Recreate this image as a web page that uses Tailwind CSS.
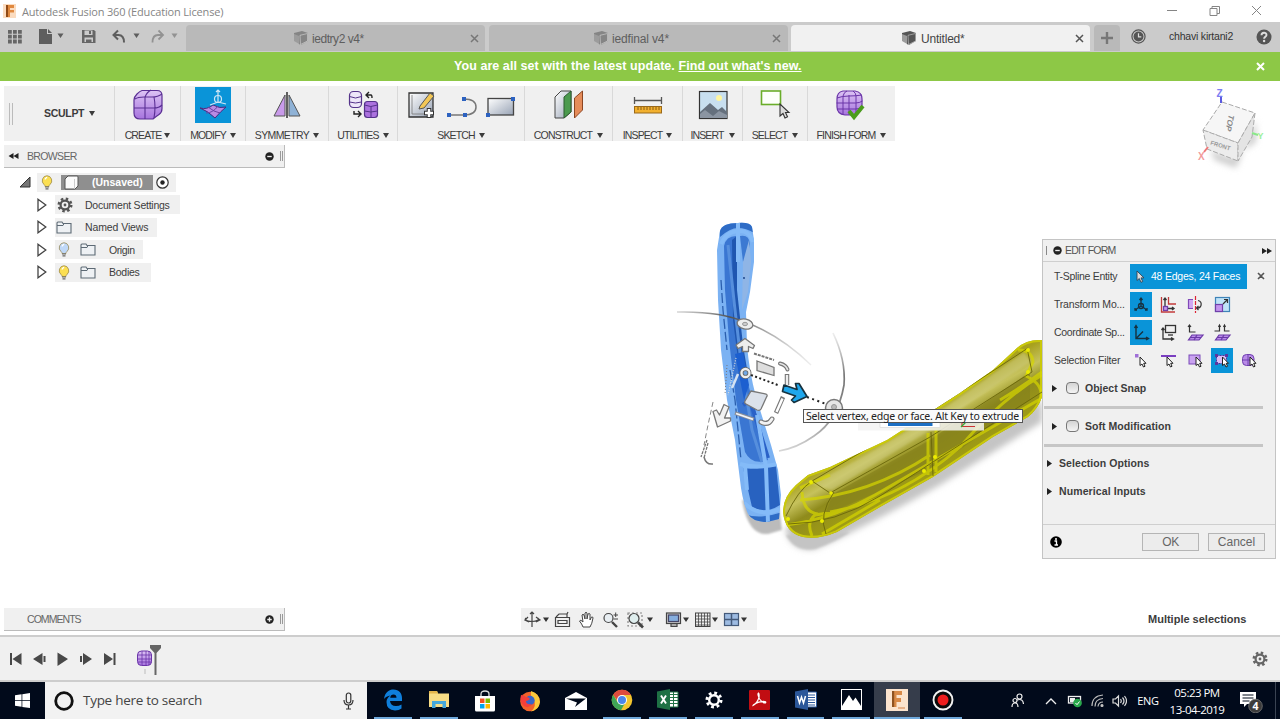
<!DOCTYPE html>
<html lang="en">
<head>
<meta charset="utf-8">
<title>Autodesk Fusion 360</title>
<script src="https://cdn.jsdelivr.net/npm/@tailwindcss/browser@4"></script>
</head>
<body class="bg-white">
<!-- shared icon symbols -->
<svg class="absolute w-0 h-0">
  <symbol id="caret" viewBox="0 0 6 5"><path d="M0 0H6L3 5Z" fill="currentColor"/></symbol>
  <symbol id="cube" viewBox="0 0 16 16"><path d="M1 3 9 1l6 2v8l-7 4-2-1V6L1 4Z" fill="currentColor"/><path d="M1 3.300 7 5v9.500L1 11Z" fill="currentColor" opacity=".55"/><path d="M7 5.300 14.500 3.500v7.500L7.500 14.500Z" fill="none" stroke="#fff" stroke-opacity=".45" stroke-width=".9"/></symbol>
  <symbol id="bulb" viewBox="0 0 12 15"><path d="M6 .7a5 5 0 0 0-3 8.800c.8.700 1 1.200 1 2h4c0-.8.200-1.300 1-2A5 5 0 0 0 6 .7Z" fill="currentColor" stroke="#8d7a3c" stroke-opacity=".75" stroke-width=".9"/><path d="M4.200 4.500a2 2 0 0 1 2-2" stroke="#fff" stroke-width="1.300" fill="none"/><path d="M4 12h4M4.500 13.800h3" stroke="#666" stroke-width="1.200"/></symbol>
  <symbol id="folder" viewBox="0 0 16 13"><path d="M1 12V2q0-1 1-1h4l1 1.500h8V12Z" fill="#eef1f4" stroke="#5d6a75" stroke-width="1.100"/><path d="M1 4.500h6l1-2" fill="none" stroke="#5d6a75" stroke-width="1"/></symbol>
  <symbol id="expand" viewBox="0 0 10 14"><path d="M1 1.200 8.800 7 1 12.800Z" fill="#fff" stroke="#444" stroke-width="1.300"/></symbol>
  <symbol id="gear" viewBox="0 0 16 16"><circle cx="8" cy="8" r="6.200" fill="none" stroke="currentColor" stroke-width="2.600" stroke-dasharray="2.435 2.435"/><circle cx="8" cy="8" r="4.400" fill="none" stroke="currentColor" stroke-width="2.200"/><circle cx="8" cy="8" r="1.400" fill="currentColor"/></symbol>
  <symbol id="cursor" viewBox="0 0 9 13"><path d="M1 1v9.500l2.300-2 1.700 3.800 1.700-.8-1.700-3.600H8Z" fill="#ddd" stroke="#345" stroke-width=".9"/></symbol>
  <symbol id="ffwd" viewBox="0 0 10 6"><path d="M0 0 5 3 0 6ZM5 0l5 3-5 3Z" fill="#222"/></symbol>
  <linearGradient id="gPurple" x1="0" y1="0" x2="0" y2="1"><stop offset="0" stop-color="#dcc3f4"/><stop offset="1" stop-color="#a774de"/></linearGradient>
  <linearGradient id="gSteel" x1="0" y1="0" x2="1" y2="1"><stop offset="0" stop-color="#fff"/><stop offset="1" stop-color="#98a3b5"/></linearGradient>
</svg>

<div class="w-[1280px] h-[719px] overflow-hidden flex flex-col bg-white font-['Liberation_Sans',sans-serif] text-[#3c3c3c] text-[10.5px] leading-none whitespace-nowrap">

  <!-- title bar -->
  <header class="h-[22px] shrink-0 flex items-center bg-white pl-[3px]">
    <svg class="w-[13px] h-[14px]" viewBox="0 0 13 14"><rect width="13" height="14" fill="#fbdcc0"/><path d="M3 1h8v3H7v2h4v2.500H7V13H3Z" fill="#e0893f"/><path d="M3 1h2v12H3Z" fill="#8f4a16"/></svg>
    <span class="ml-[6px] text-[11px] tracking-[-0.17px] font-['Open_Sans',sans-serif] text-[#858585]">Autodesk Fusion 360 (Education License)</span>
    <svg class="ml-auto w-[96px] h-[12px] mr-[18px]" viewBox="0 0 96 12"><path d="M1 5.500h10M44 3.500h7v7h-7ZM46 3.500v-2h7.500v7H51M86 1l9 9M95 1l-9 9" fill="none" stroke="#858585" stroke-width="1"/></svg>
  </header>

  <!-- document tabs -->
  <nav class="h-[30px] shrink-0 flex items-end bg-[#cbcbcb] pb-px">
    <svg class="w-[186px] h-[29px]" viewBox="0 0 186 29">
      <path d="M8 8h3.800v3.800H8Zm5 0h3.800v3.800H13Zm5 0h3.800v3.800H18ZM8 12.800h3.800v3.800H8Zm5 0h3.800v3.800H13Zm5 0h3.800v3.800H18ZM8 17.600h3.800v3.800H8Zm5 0h3.800v3.800H13Zm5 0h3.800v3.800H18Z" fill="#666"/>
      <path d="M39 7h8v5h5v10H39ZM48 7l4 4h-4Z" fill="#5e5e5e"/>
      <path d="M57.500 11.500h6l-3 4.500ZM133.500 11.500h6l-3 4.500Z" fill="#5e5e5e"/>
      <path d="M82 8h12l1.500 1.500V21H82Z" fill="#666"/><path d="M84.500 8.500h8v4.500h-8ZM84.500 15.500h8.500V20h-8.500Z" fill="#cbcbcb"/><path d="M89 9h2v3h-2ZM86 17.500h5.500V21H86Z" fill="#666"/>
      <path d="M118 8.500 113.500 13l4.500 4.500M114 13h4.500q5.500 0 5.500 7.500" fill="none" stroke="#5e5e5e" stroke-width="2"/>
      <path d="M158.500 8.500 163 13l-4.500 4.500M162.500 13H158q-5.500 0-5.500 7.500" fill="none" stroke="#929292" stroke-width="1.800"/>
      <path d="M171.500 11.500h6l-3 4.500Z" fill="#929292"/>
    </svg>
    <div class="w-[299px] h-[26px] bg-[#b9b9b9] rounded-t-sm flex items-center pl-[107px] pr-[6px] text-[12px] text-[#5e5e5e]">
      <svg class="w-4 h-4 text-[#858585]"><use href="#cube"/></svg><span class="ml-[3px] mt-[2px] tracking-[-0.45px]">iedtry2 v4*</span>
      <svg class="ml-auto w-[9px] h-[9px]" viewBox="0 0 9 9"><path d="M1 1l7 7M8 1 1 8" stroke="#777" stroke-width="1.500"/></svg>
    </div>
    <div class="w-[299px] ml-[4px] h-[26px] bg-[#b9b9b9] rounded-t-sm flex items-center pl-[104px] pr-[7px] text-[12px] text-[#5e5e5e]">
      <svg class="w-4 h-4 text-[#858585]"><use href="#cube"/></svg><span class="ml-[3px] mt-[2px] tracking-[-0.15px]">iedfinal v4*</span>
      <svg class="ml-auto w-[9px] h-[9px]" viewBox="0 0 9 9"><path d="M1 1l7 7M8 1 1 8" stroke="#777" stroke-width="1.500"/></svg>
    </div>
    <div class="w-[299px] ml-[3px] h-[26px] bg-[#f1f1f1] rounded-t-sm flex items-center pl-[110px] pr-[6px] text-[12px] text-[#444]">
      <svg class="w-4 h-4 text-[#555]"><use href="#cube"/></svg><span class="ml-[4px] mt-[2px] tracking-[-0.2px]">Untitled*</span>
      <svg class="ml-auto w-[9px] h-[9px]" viewBox="0 0 9 9"><path d="M1 1l7 7M8 1 1 8" stroke="#555" stroke-width="1.500"/></svg>
    </div>
    <div class="w-[26px] ml-[4px] h-[26px] bg-[#b9b9b9] rounded-t-sm flex items-center justify-center">
      <svg class="w-3 h-3" viewBox="0 0 12 12"><path d="M6 0v12M0 6h12" stroke="#777" stroke-width="2.400"/></svg>
    </div>
    <div class="flex-1 h-[29px] flex items-center pl-[11px] pr-[8px] text-[#333]">
      <svg class="w-[15px] h-[15px]" viewBox="0 0 16 16"><circle cx="8" cy="8" r="7" fill="none" stroke="#555" stroke-width="1.300"/><circle cx="8" cy="8" r="5.300" fill="#555"/><path d="M8 4.500V8.500h3" stroke="#ddd" stroke-width="1.300" fill="none"/></svg>
      <span class="ml-[23px] text-[10.5px] tracking-[-0.2px]">chhavi kirtani2</span>
      <svg class="ml-auto w-[16px] h-[16px]" viewBox="0 0 16 16"><circle cx="8" cy="8" r="7.500" fill="#555"/><path d="M5.500 6.200C5.500 3 10.500 3 10.500 6c0 1.800-2.400 1.900-2.400 3.800" fill="none" stroke="#ddd" stroke-width="1.900"/><circle cx="8.100" cy="12" r="1.200" fill="#ddd"/></svg>
    </div>
  </nav>

  <!-- update banner -->
  <div class="h-[29px] shrink-0 flex items-center bg-[#8dc846] text-white font-bold text-[12.5px] tracking-[0.06px] pb-px pl-[454px] pr-[15px]">
    <p>You are all set with the latest update. <span class="underline">Find out what's new.</span></p>
    <svg class="w-[9px] h-[9px] ml-auto" viewBox="0 0 9 9"><path d="M1 1l7 7M8 1 1 8" stroke="#fff" stroke-width="2"/></svg>
  </div>

  <!-- modelling canvas -->
  <main class="h-[554px] shrink-0 relative flex flex-col">
    <svg class="absolute inset-0 w-[1280px] h-[554px]" viewBox="0 81 1280 554">
      <defs>
        <filter id="soft" x="-20%" y="-20%" width="140%" height="140%"><feGaussianBlur stdDeviation="3"/></filter>
        <filter id="soft1" x="-20%" y="-20%" width="140%" height="140%"><feGaussianBlur stdDeviation="1.300"/></filter>
        <linearGradient id="gYel" gradientUnits="userSpaceOnUse" x1="895" y1="425" x2="930" y2="485"><stop offset="0" stop-color="#a8a11e"/><stop offset=".25" stop-color="#c6c25c"/><stop offset=".48" stop-color="#8f8b1c"/><stop offset="1" stop-color="#a5a212"/></linearGradient>
        <linearGradient id="gArc" x1="0" x2="1"><stop offset="0" stop-color="#999" stop-opacity=".4"/><stop offset=".4" stop-color="#555"/><stop offset="1" stop-color="#aaa" stop-opacity=".2"/></linearGradient>
        <linearGradient id="gArc2" x1="0" x2="0" y1="0" y2="1"><stop offset="0" stop-color="#aaa" stop-opacity=".2"/><stop offset=".35" stop-color="#777"/><stop offset=".7" stop-color="#888"/><stop offset="1" stop-color="#999" stop-opacity=".4"/></linearGradient>
        <clipPath id="cBlue"><path d="M720 231Q722 223 738 223 750 222 752 227L754 240 754 262 750 292 746 312 747 345Q749 370 756 397L771 445 778 470 781 495 779 519 767 522Q753 522 748 514 742 500 740 480L735 440 727 400 721 350 718 300 717 250Z"/></clipPath>
        <clipPath id="cYel"><path d="M783 512Q783 497 796 485L808 475 830 467 887 440 960 393 993 370 1017 348Q1027 339 1042 340V397Q1038 409 1028 417L993 437 933 477 880 507 837 532Q818 540 803 537 785 533 783 512Z"/></clipPath>
      </defs>

      <!-- shadows under the bodies -->
      <path d="M742 500Q748 536 768 534L782 530 779 505Z" fill="#bbb" filter="url(#soft1)"/>
      <path d="M785 528Q790 552 815 549 860 530 940 485L1042 422V400L940 465Z" fill="#c4c4c4" filter="url(#soft)"/>
      <path d="M786 535Q795 552 815 549 835 542 850 532Z" fill="#c4c4c4" filter="url(#soft1)"/>

      <!-- blue body -->
      <g clip-path="url(#cBlue)" fill="none">
        <rect x="710" y="218" width="80" height="310" fill="#7bb2f3"/>
        <path d="M718 222h36v11q-8-5-16-5t-18 9Z" fill="#2e6cc6"/>
        <path d="M724 246Q726 236 736 236V320L742 345 747 380 758 420 768 460Q752 466 745 452L736 400 729 340 725 290Z" fill="#3a76d2"/>
        <path d="M737 236V290L743 345 748 375 740 375 733 320 732 240Z" fill="#1f56b0"/>
        <path d="M728 245 735 310 742 370 752 430 762 462" stroke="#568fdd" stroke-width="3"/>
        <path d="M740 236Q749 234 750 244L747 258 743 262Z" fill="#3c79d2"/>
        <path d="M743 262 749 240 751 262 748 292 742 310Z" fill="#8fb5e6"/>
        <path d="M735 354 743 352 749 385 744 400Z" fill="#1c5fd0"/>
        <path d="M743 405 750 400 768 458" stroke="#2a62c8" stroke-width="4"/>
        <path d="M743 468Q752 470 765 467L776 466 780 505Q765 515 752 507Z" fill="#2862c0"/>
        <path d="M744 514Q760 520 782 512V525H744Z" fill="#2e6cc6"/>
        <path d="M738 222V262M721 244Q726 232 738 231T753 242M740 464Q755 469 778 464M757 415L766 467 768 523M744 503Q760 518 780 509M745 466 747 490" stroke="#84bbf8" stroke-width="4"/>
        <path d="M721 280 723 310 727 350M730 370 735 400 741 460" stroke="#2b5fae" stroke-width="1.300" stroke-dasharray="10 3"/>
        <circle cx="744" cy="278" r=".9" fill="#113a80"/>
      </g>

      <!-- yellow body -->
      <g clip-path="url(#cYel)" fill="none">
        <rect x="780" y="335" width="265" height="205" fill="url(#gYel)"/>
        <path d="M812 484Q870 455 945 408L1024 352 1030 362 930 430 832 490Z" fill="#d3d08a" opacity=".45" filter="url(#soft1)"/>
        <path d="M833 494 930 440 1030 372V400L935 467 825 515Z" fill="#86811c" opacity=".7"/>
        <path d="M783 512Q783 497 796 485L808 475 830 467 887 440 960 393 993 370 1017 348Q1027 339 1042 340V397Q1038 409 1028 417L993 437 933 477 880 507 837 532Q818 540 803 537 785 533 783 512Z" stroke="#c9c80a" stroke-width="4"/>
        <path d="M800 500Q870 495 930 455M830 512Q900 500 960 447 1000 400 1042 375M786 525Q830 520 875 495L1042 398M802 492Q803 512 818 514M812 536Q806 522 815 515L835 512M928 433V475M936 430V472M800 488 830 475M822 534 880 500M1018 350Q1032 350 1033 362L1026 376Q1045 385 1040 400M1000 400Q1025 385 1042 372" stroke="#d6d600" stroke-width="3" opacity=".7"/>
        <path d="M786 516Q798 490 812 481L930 412 1028 348M830 493 930 437 1032 372M788 524Q835 524 880 496L1042 392M812 481 830 493M834 492Q818 515 826 534M931 432 933 476M1027 348 1032 372" stroke="#6a670a" stroke-width=".9"/>
        <g fill="#ecec00"><circle cx="811" cy="482" r="2"/><circle cx="831" cy="493" r="1.800"/><circle cx="822" cy="521" r="2"/><circle cx="788" cy="519" r="2"/><circle cx="924" cy="471" r="2"/><circle cx="935" cy="457" r="2"/><circle cx="1028" cy="350" r="2"/><circle cx="1028" cy="372" r="2"/></g>
      </g>

      <!-- transform manipulator -->
      <g fill="none">
        <path d="M677 312Q720 311 745 322 780 335 811 365" stroke="url(#gArc)" stroke-width="1.500"/>
        <path d="M833 333Q846 360 844 385 838 420 814 436 797 448 779 451" stroke="url(#gArc2)" stroke-width="1.700"/>
        <path d="M713 402 708 425 704 445" stroke="#888" stroke-width="1" stroke-dasharray="5 3"/>
        <path d="M704 457Q706 465 713 464" stroke="#777" stroke-width="1.500"/>
        <path d="M736 358 728 395" stroke="#ddd" stroke-width="1.200" stroke-dasharray="1 1.500"/>
        <path d="M727 365 725 395" stroke="#777" stroke-width="1" stroke-dasharray="1 2"/>
        <ellipse cx="745" cy="324" rx="8" ry="5" transform="rotate(12 745 324)" fill="#eee" stroke="#777" stroke-width="1.300"/>
        <ellipse cx="745" cy="324" rx="2.500" ry="1.700" fill="#ccc" stroke="#999"/>
        <path d="M745 338.500 736 345 738 348.500 742.500 346.500V351.500H748.500V346.500L753 348.500 754.500 345.500Z" fill="#eee" stroke="#777" stroke-width="1.300" stroke-linejoin="round"/>
        <path d="M754 353.500 774 360" stroke="#777" stroke-width="2" stroke-dasharray="3 1"/>
        <path d="M757 361 774 367.500V375.500L757 370.500Z" fill="#dedede" stroke="#777" stroke-width="1.300"/>
        <path d="M780 363.500Q786 365 787.500 369.500" stroke="#777" stroke-width="4" stroke-linecap="round"/>
        <path d="M780 363.500Q786 365 787.500 369.500" stroke="#e8e8e8" stroke-width="1.700" stroke-linecap="round"/>
        <path d="M787 374V385" stroke="#777" stroke-width="4.500"/><path d="M787 375V385" stroke="#eee" stroke-width="2.300"/>
        <path d="M783 397 776 413" stroke="#777" stroke-width="4.500"/><path d="M782.500 398.500 776.500 412" stroke="#fff" stroke-width="2.500"/>
        <path d="M761 422Q768 426 772 419" stroke="#777" stroke-width="5" stroke-linecap="round"/><path d="M761 422Q768 426 772 419" stroke="#f2f2f2" stroke-width="2.700" stroke-linecap="round"/>
        <path d="M735 413 754 419.500" stroke="#8a8f98" stroke-width="3.500"/><path d="M736 413.500 753 419.300" stroke="#f0f4fa" stroke-width="1.800"/>
        <path d="M732 388 738 374" stroke="#d5e3f3" stroke-width="2.500"/>
        <path d="M751 391 766 394Q768 395 766.500 397L761 409Q760 411 757 410L746 404Q744 403 745 401Z" fill="#dbe1ea" stroke="#777" stroke-width="1.300"/>
        <path d="M751 375 779 385.500" stroke="#222" stroke-width="2" stroke-dasharray="2 2.400"/>
        <path d="M807 397 826 404" stroke="#222" stroke-width="2" stroke-dasharray="2 3.500"/>
        <circle cx="745.500" cy="373" r="4" fill="#6fa7e6" stroke="#666" stroke-width="4"/><circle cx="745.500" cy="373" r="4" stroke="#eee" stroke-width="2.300"/>
        <path d="M784 385 797 389.500 795.500 383.500 799 383.500 807 396.500 794 402.500 791.500 400 795.500 396 782.500 391.500Z" fill="#1fa7ec" stroke="#16323f" stroke-width="1.700" stroke-linejoin="round"/>
        <path d="M724 404.500 719.500 415 716.500 410 713 411.500 717.500 427 730.500 421 730.500 418 724.500 418 729 407Z" fill="#f2f2f2" stroke="#777" stroke-width="1.300" stroke-linejoin="round"/>
        <circle cx="834" cy="408" r="8.500" fill="#e6e6e6" stroke="#777" stroke-width="1.500"/><circle cx="834" cy="407" r="2.500" fill="#bbb" stroke="#999"/>
        <path d="M707 440 701 457M708 443 704 458" stroke="#777" stroke-width="1.300" stroke-dasharray="3 1"/>
      </g>

      <!-- mini toolbar hidden behind the tooltip -->
      <rect x="858" y="422" width="126" height="8.500" fill="#f3f3f3" opacity=".85"/>
      <rect x="880" y="422" width="60" height="5.500" fill="#fff" stroke="#ccc" stroke-width=".5"/>
      <rect x="888" y="422" width="44.500" height="4" fill="#1c6fc4"/>
      <path d="M962 423v3.500h13" stroke="#c33" stroke-width="1.200" fill="none"/><path d="M961 427l6-6" stroke="#3a3" stroke-width="1.200"/>

      <!-- view cube -->
      <path d="M1210 150 1232 158 1256 142 1256 120 1236 168 1215 160Z" fill="#ccc" filter="url(#soft)"/>
      <path d="M1222 102 1255 113 1238 143 1203 130Z" fill="#f6f6f6" stroke="#aaa" stroke-width="1" stroke-dasharray="5 2"/>
      <path d="M1203 130 1238 143 1238 161 1207 149Z" fill="#ececec" stroke="#aaa" stroke-width="1" stroke-dasharray="5 2"/>
      <path d="M1255 113 1252 137 1238 161V143Z" fill="#e4e4e4" stroke="#aaa" stroke-width="1" stroke-dasharray="5 2"/>
      <text transform="translate(1229 114) rotate(102) skewX(-12)" font-size="8" font-weight="bold" fill="#888">TOP</text>
      <text transform="translate(1210 144.500) rotate(17)" font-size="6" font-weight="bold" fill="#999">FRONT</text>
      <path d="M1221 103V96" stroke="#5a5ae0" stroke-width="2"/><path d="M1252 133l6 2" stroke="#8ae88a" stroke-width="2"/><path d="M1208 147l-4 5" stroke="#e77" stroke-width="2"/>
      <text x="1216.500" y="97" font-size="10" font-weight="bold" fill="#7d7df2">Z</text><text x="1257.500" y="139" font-size="9" font-weight="bold" fill="#9df09d">Y</text><text x="1198" y="160" font-size="10" font-weight="bold" fill="#f29a9a">X</text>
    </svg>

    <!-- ribbon -->
    <div class="relative mt-[5px] ml-1 w-[891px] h-[55px] bg-[#f0f0f0] grid grid-cols-[111px_66px_65px_83px_69px_127px_88px_70px_60px_65px_87px] divide-x divide-[#d9d9d9] tracking-[-0.85px] text-[10.5px]">
      <div class="flex items-center h-full">
        <div class="ml-[5px] w-[4px] h-[22px] border-x border-[#bbb]"></div>
        <span class="ml-[31px] font-bold tracking-[-0.3px]">SCULPT</span><svg class="ml-[5px] w-[6px] h-[5px]"><use href="#caret"/></svg>
      </div>
      <div class="flex flex-col items-center pt-px">
        <svg class="w-9 h-9" viewBox="0 0 36 36"><path d="M12 3.500h15q5 0 5 5v13q0 4-3 6t-6 4.500H10q-6 0-6-6V13q0-3 3-6t5-3.500Z" fill="url(#gPurple)" stroke="#5a2f94" stroke-width="1.200"/><path d="M5 12q3-2 9-2h8q6 0 10-3M15 10v22M24 10q2 10 0 21M4 21h20q5 0 8-3M15 10q2-5 6-7" fill="none" stroke="#5a2f94" stroke-width="1.100"/></svg>
        <span class="flex items-center mt-[7px]">CREATE<svg class="ml-[3px] w-[6px] h-[5px]"><use href="#caret"/></svg></span>
      </div>
      <div class="flex flex-col items-center pt-px">
        <svg class="w-9 h-9 bg-[#0a94d8]" viewBox="0 0 36 36"><path d="M5 21q7 2 13-3 7 4 13 2-5 4-11 11-7-7-15-10Z" fill="#b98be4" stroke="#4b2a80"/><path d="M11 26q7 0 12-7M25 26q-6-1-12-6" stroke="#6a43a5" fill="none"/><path d="M23 3v12M23 15l-8 3M23 15l8 2M21 5l2-2 2 2" fill="none" stroke="#cfe6f5" stroke-width="1.200"/><circle cx="23" cy="12" r="3.500" fill="none" stroke="#cfe6f5" stroke-width="1.200"/></svg>
        <span class="flex items-center mt-[7px]">MODIFY<svg class="ml-[4px] w-[6px] h-[5px]"><use href="#caret"/></svg></span>
      </div>
      <div class="flex flex-col items-center pt-px">
        <svg class="w-9 h-9" viewBox="0 0 36 36"><path d="M16 8v21H5Z" fill="#c99bea" stroke="#555"/><path d="M20 8v21h11Z" fill="#8fb2d6" stroke="#555"/><path d="M18 5v26" stroke="#222" stroke-width="1.400"/></svg>
        <span class="flex items-center mt-[7px] tracking-[-0.6px]">SYMMETRY<svg class="ml-[4px] w-[6px] h-[5px]"><use href="#caret"/></svg></span>
      </div>
      <div class="flex flex-col items-center pt-px">
        <svg class="w-9 h-9" viewBox="0 0 36 36"><rect x="4.500" y="4.500" width="12" height="16" rx="4" fill="#eee6f8" stroke="#55338a" stroke-width="1.200"/><path d="M4.500 9.500q6 3 12 0M4.500 15q6 2 12 0" stroke="#55338a" fill="none"/><rect x="19.500" y="14.500" width="13" height="16" rx="3" fill="#ab71de" stroke="#55338a" stroke-width="1.200"/><path d="M19.500 18q6 3 13 0M19.500 24q6 2 13 0M26 19v11" stroke="#55338a" fill="none"/><path d="M21 8h5q1 0 1 3M24 5l-3 3 3 3M9 24v3h6M13 24l3 3-3 3" fill="none" stroke="#222" stroke-width="1.400"/></svg>
        <span class="flex items-center mt-[7px]">UTILITIES<svg class="ml-[4px] w-[6px] h-[5px]"><use href="#caret"/></svg></span>
      </div>
      <div class="flex flex-col items-center pt-px">
        <svg class="w-[118px] h-9" viewBox="0 0 118 36">
          <path d="M7 6h24v24H7Z" fill="url(#gSteel)" stroke="#333" stroke-width="1.300"/><path d="M10 8v19h18" fill="none" stroke="#777" stroke-width=".8"/><path d="M18 19 28 6l4 3-10 12-5 1Z" fill="#f3c757" stroke="#555"/><path d="M27 21v10M22 26h10" stroke="#333" stroke-width="4.500"/><path d="M27 22v8M23 26h8" stroke="#fff" stroke-width="2.500"/>
          <path d="M47 28h16M62 12q12 0 12 8t-12 8" fill="none" stroke="#777" stroke-width="1.500"/><path d="M45 26h4v4h-4ZM61 26h4v4h-4ZM60 10h4v4h-4Z" fill="#2d62c0"/>
          <rect x="86" y="11.500" width="25.500" height="16.500" fill="url(#gSteel)" stroke="#444" stroke-width="1.300"/><path d="M84 26h4v4h-4ZM109 10h4v4h-4Z" fill="#2d62c0"/>
        </svg>
        <span class="flex items-center mt-[7px]">SKETCH<svg class="ml-[4px] w-[6px] h-[5px]"><use href="#caret"/></svg></span>
      </div>
      <div class="flex flex-col items-center pt-px">
        <svg class="w-9 h-9" viewBox="0 0 36 36"><path d="M4 10l6-6h10v21l-7 6H4Z" fill="url(#gSteel)" stroke="#444"/><path d="M13 10 20 4v21l-7 6Z" fill="#4b9a4e" stroke="#2c5d30"/><path d="M23.500 11 31.500 4v19l-8 8Z" fill="#e58c5a" stroke="#8c4522"/></svg>
        <span class="flex items-center mt-[7px]">CONSTRUCT<svg class="ml-[5px] w-[6px] h-[5px]"><use href="#caret"/></svg></span>
      </div>
      <div class="flex flex-col items-center pt-px">
        <svg class="w-9 h-9" viewBox="0 0 36 36"><path d="M4.500 10v7M31.500 10v7M5 13.500h26" stroke="#555" stroke-width="1.300"/><rect x="4.500" y="19.500" width="27" height="6.500" fill="#f2b02e" stroke="#99691a"/><path d="M8 20v3M11 20v3M14 20v3M17 20v3M20 20v3M23 20v3M26 20v3M29 20v3" stroke="#7b5210" stroke-width=".9"/></svg>
        <span class="flex items-center mt-[7px]">INSPECT<svg class="ml-[4px] w-[6px] h-[5px]"><use href="#caret"/></svg></span>
      </div>
      <div class="flex flex-col items-center pt-px">
        <svg class="w-9 h-9" viewBox="0 0 36 36"><rect x="4.500" y="4.500" width="27.500" height="27" fill="#c8dfef" stroke="#333" stroke-width="1.200"/><circle cx="24" cy="11" r="3" fill="#fff6a0"/><path d="M5 25l10-9 8 7 4-3 5 5v6H5Z" fill="#65707d"/><path d="M5 27l5-4 8 6 6-5 8 4v3H5Z" fill="#8b95a2"/></svg>
        <span class="flex items-center mt-[7px]">INSERT<svg class="ml-[5px] w-[6px] h-[5px]"><use href="#caret"/></svg></span>
      </div>
      <div class="flex flex-col items-center pt-px">
        <svg class="w-9 h-9" viewBox="0 0 36 36"><rect x="4.500" y="4" width="19" height="13.500" fill="#fcfffa" stroke="#6aad2a" stroke-width="1.600"/><path d="M23 17v12l3-2.500 2 4.500 2.500-1.200-2-4.300H32Z" fill="#ddd" stroke="#333" stroke-width="1.100"/></svg>
        <span class="flex items-center mt-[7px]">SELECT<svg class="ml-[5px] w-[6px] h-[5px]"><use href="#caret"/></svg></span>
      </div>
      <div class="flex flex-col items-center pt-px">
        <svg class="w-9 h-9 mr-[4px]" viewBox="0 0 36 36"><path d="M11 4h12q7 1 7 8v7q-1 7-7 9H13q-8-1-8-8v-8q0-7 6-8Z" fill="url(#gPurple)" stroke="#6a34a8" stroke-width="1.200"/><path d="M5 11q5-2 12-2t13-1M4.500 16h19q4 0 7-2M5 22h19q3 0 6-2M11 9v18M17 8v20M24 9v18M11 9q1-4 4-5M24 9q0-3-3-5" fill="none" stroke="#6a34a8" stroke-width="1"/><path d="M17 24l5 6 9-11" fill="none" stroke="#4b9d1c" stroke-width="4"/></svg>
        <span class="flex items-center mt-[7px]">FINISH FORM<svg class="ml-[5px] w-[6px] h-[5px]"><use href="#caret"/></svg></span>
      </div>
    </div>

    <div class="relative flex-1 flex justify-between">
      <!-- left column: browser tree and comments -->
      <aside class="ml-1 w-[281px] flex flex-col pt-1 pb-[4px]">
        <div class="h-[23px] bg-[#f0f0f0] border-b border-r border-[#bbb] flex items-center pl-[4px] pr-px text-[#666]">
          <svg class="w-[11px] h-[6px] rotate-180"><use href="#ffwd"/></svg>
          <span class="ml-2 tracking-[-0.65px]">BROWSER</span>
          <svg class="ml-auto w-[9px] h-[9px]" viewBox="0 0 10 10"><circle cx="5" cy="5" r="4.700" fill="#222"/><path d="M2.500 5h5" stroke="#eee" stroke-width="1.500"/></svg>
          <div class="ml-[6px] w-[3px] h-[10px] border-x border-[#999]"></div>
        </div>
        <div class="pt-[3px] flex flex-col leading-none">
          <div class="h-[22.5px] flex items-center pl-[15px]">
            <svg class="w-[12px] h-[12px]" viewBox="0 0 12 12"><path d="M11 1v10H1Z" fill="#777" stroke="#333"/></svg>
            <div class="ml-[6px] w-[139px] h-[19px] bg-[#f0f0f0] flex items-center">
              <svg class="ml-[4px] w-[12px] h-[15px] text-[#fbdf53]"><use href="#bulb"/></svg>
              <div class="ml-[8px] w-[92px] h-[15px] bg-[#8f8f8f] flex items-center text-white font-bold">
                <svg class="ml-[3px] w-[15px] h-[15px]" viewBox="0 0 15 15"><path d="M1 4l3-3h9q1 0 1 1v9l-3 3H1Z" fill="#fbfbfb" stroke="#555"/><path d="M10.500 4v10" stroke="#ccc"/></svg>
                <span class="ml-[13px]">(Unsaved)</span>
              </div>
              <svg class="ml-[3px] w-[13px] h-[13px]" viewBox="0 0 13 13"><circle cx="6.500" cy="6.500" r="5.700" fill="#fff" stroke="#333" stroke-width="1.200"/><circle cx="6.500" cy="6.500" r="2.200" fill="#222"/></svg>
            </div>
          </div>
          <div class="h-[22.5px] flex items-center pl-[33px]">
            <svg class="w-[10px] h-[14px]"><use href="#expand"/></svg>
            <div class="ml-[8px] w-[125px] h-[19px] bg-[#f0f0f0] flex items-center"><svg class="ml-[2px] w-[16px] h-[16px] text-[#555]"><use href="#gear"/></svg><span class="ml-[12px] tracking-[-0.24px]">Document Settings</span></div>
          </div>
          <div class="h-[22.5px] flex items-center pl-[33px]">
            <svg class="w-[10px] h-[14px]"><use href="#expand"/></svg>
            <div class="ml-[8px] w-[102px] h-[19px] bg-[#f0f0f0] flex items-center"><svg class="ml-[1px] w-[16px] h-[13px]"><use href="#folder"/></svg><span class="ml-[13px] tracking-[-0.1px]">Named Views</span></div>
          </div>
          <div class="h-[22.5px] flex items-center pl-[33px]">
            <svg class="w-[10px] h-[14px]"><use href="#expand"/></svg>
            <div class="ml-[8px] w-[88px] h-[19px] bg-[#f0f0f0] flex items-center"><svg class="ml-[3px] w-[12px] h-[15px] text-[#bfd8f8]"><use href="#bulb"/></svg><svg class="ml-[10px] w-[16px] h-[13px]"><use href="#folder"/></svg><span class="ml-[13px] tracking-[-0.4px]">Origin</span></div>
          </div>
          <div class="h-[22.5px] flex items-center pl-[33px]">
            <svg class="w-[10px] h-[14px]"><use href="#expand"/></svg>
            <div class="ml-[8px] w-[96px] h-[19px] bg-[#f0f0f0] flex items-center"><svg class="ml-[3px] w-[12px] h-[15px] text-[#fbdf53]"><use href="#bulb"/></svg><svg class="ml-[10px] w-[16px] h-[13px]"><use href="#folder"/></svg><span class="ml-[13px] tracking-[-0.25px]">Bodies</span></div>
          </div>
        </div>
        <div class="mt-auto h-[23px] bg-[#f0f0f0] border-b border-r border-[#bbb] flex items-center pl-[23px] pr-px text-[#666]">
          <span class="tracking-[-0.95px]">COMMENTS</span>
          <svg class="ml-auto w-[9px] h-[9px]" viewBox="0 0 10 10"><circle cx="5" cy="5" r="4.700" fill="#222"/><path d="M2.500 5h5M5 2.500v5" stroke="#eee" stroke-width="1.500"/></svg>
          <div class="ml-[6px] w-[3px] h-[10px] border-x border-[#999]"></div>
        </div>
      </aside>

      <!-- view navigation strip -->
      <div class="self-end mb-[5px] w-[236px] h-[22px] bg-[#f0f0f0] mr-[49px]">
        <svg class="w-[236px] h-[22px]" viewBox="521 608 236 22" fill="none" stroke="#444" stroke-width="1.200">
          <path d="M532 612v15M530 614l2-2 2 2M526 618q-3 3 6 3.500 8-.5 6-3.500M536 622l4-2-4-3M528 617l-3 3 4 2"/>
          <path d="M543 617.500h6l-3 4.500ZM647 617.500h6l-3 4.500ZM683 617.500h6l-3 4.500ZM712 617.500h6l-3 4.500ZM741 617.500h6l-3 4.500Z" fill="#333" stroke="none"/>
          <path d="M555.500 617.500h14v9h-14ZM558 620.500h9v3h-9ZM556 617l3-3h8v3M567 614l1-2"/>
          <path d="M583 627q-1-3-3.500-6 1-2 3.500 1l-1-7q1-1.500 2 0l1 4v-6q1-1.500 2 0v6l1-5q1.500-1 2 0v6l1.500-3q1.500-.5 1.500 1-1 6-3 9Z" fill="#fff" stroke-width="1"/>
          <circle cx="608.500" cy="618" r="4.500" fill="#e8eef2"/><path d="M612 622l5 5" stroke-width="2.400"/><path d="M613.500 615h4.500M615.700 612.500v4.500M613.500 619h4.500" stroke-width="1"/>
          <path d="M628 613h14v13h-14Z" stroke-dasharray="2 2" stroke="#888"/><circle cx="634" cy="618.500" r="5" fill="#dfeeee"/><path d="M638 622.500l5 5" stroke-width="2.600"/>
          <rect x="666.500" y="613" width="14" height="10.500" fill="#ccc"/><rect x="668.500" y="615" width="10" height="6.500" fill="#86aede" stroke="#446"/><path d="M671 624v2.500h6V624" fill="#aaa"/>
          <rect x="695.500" y="613" width="14.500" height="13.500" fill="#eee" stroke-width="1"/><path d="M698.500 613v13M701.500 613v13M704.500 613v13M707.500 613v13M696 616h14M696 619h14M696 622h14M696 625h14" stroke-width=".8"/>
          <rect x="724.500" y="613.500" width="14" height="12" fill="#9dbbe2" stroke="#445a7a"/><path d="M731.500 613v13M724 619.500h15" stroke="#445a7a" stroke-width="1.500"/>
        </svg>
      </div>

      <!-- right column: edit form and status -->
      <aside class="w-[238px] pt-[98px] flex flex-col">
        <section class="w-[234px] h-[320px] bg-[#f0f0f0] border border-[#c4c4c4] flex flex-col tracking-[-0.2px]">
          <div class="h-[22px] shrink-0 border-b border-[#cfcfcf] flex items-center pl-px pr-[3px] text-[#555]">
            <div class="w-[3px] h-[9px] border-r border-[#888]"></div>
            <svg class="ml-[6px] w-[9px] h-[9px]" viewBox="0 0 10 10"><circle cx="5" cy="5" r="4.700" fill="#222"/><path d="M2.500 5h5" stroke="#eee" stroke-width="1.500"/></svg>
            <span class="ml-[3px] tracking-[-0.8px]">EDIT FORM</span>
            <svg class="ml-auto w-[10px] h-[6px]"><use href="#ffwd"/></svg>
          </div>
          <div class="grid grid-cols-[76px_1fr] auto-rows-[28px] items-center pl-[11px]">
            <span class="tracking-[-0.3px]">T-Spline Entity</span>
            <div class="flex items-center">
              <div class="w-[117px] h-[25px] bg-[#0a94d8] flex items-center text-white"><svg class="ml-[6px] w-[9px] h-[13px]"><use href="#cursor"/></svg><span class="ml-[6px] tracking-[-0.23px]">48 Edges, 24 Faces</span></div>
              <svg class="ml-[10px] w-[8px] h-[8px]" viewBox="0 0 8 8"><path d="M1 1l3 3-3 3M7 1 4 4l3 3" stroke="#555" stroke-width="1.600" fill="none"/></svg>
            </div>
            <span>Transform Mo...</span>
            <div class="flex gap-[5px]">
              <svg class="w-[22px] h-[25px] bg-[#0a94d8]" viewBox="0 0 22 25" fill="none" stroke="#17313f" stroke-width="1.300"><path d="M11 6v8M11 14l-6 4M11 14l6 4M9.500 8 11 6l1.500 2M5 16v2h2M17 16v2h-2"/><circle cx="11" cy="14" r="2.500"/></svg>
              <svg class="w-[22px] h-[25px]" viewBox="0 0 22 25" fill="none" stroke-width="1.300"><path d="M4.500 5v15H18M11.500 5v7H19" stroke="#c23b3b"/><path d="M8 6v8M6.500 8 8 6l1.500 2M11 16.500h6M15 15l2 1.500-2 1.500" stroke="#333"/><rect x="6.500" y="14.500" width="4" height="4" fill="#c69af0" stroke="#7040a8"/></svg>
              <svg class="w-[22px] h-[25px]" viewBox="0 0 22 25" fill="none" stroke-width="1.200"><path d="M9 7.500H4.500v9H9" fill="#d0a8f2" stroke="#8048b8"/><path d="M11.500 4v17" stroke="#d23" stroke-dasharray="4 1"/><path d="M14 8.500q4 1 3 5-1 3-4 2.500M14.500 14l-2 2 2 2" stroke="#333"/></svg>
              <svg class="w-[22px] h-[25px]" viewBox="0 0 22 25" fill="none" stroke-width="1.200"><rect x="4.500" y="5.500" width="14" height="14" fill="#bfe3f8" stroke="#3f84b8"/><rect x="4.500" y="12.500" width="7" height="7" fill="#c494ee" stroke="#7040a8"/><path d="M12 12l4.500-4.500M13 7.500h3.500V11" stroke="#333"/></svg>
            </div>
            <span class="tracking-[-0.33px]">Coordinate Sp...</span>
            <div class="flex gap-[5px]">
              <svg class="w-[22px] h-[25px] bg-[#0a94d8]" viewBox="0 0 22 25" fill="none" stroke="#17313f" stroke-width="1.400"><path d="M6 5.500v13h12M4.500 8 6 5.500 7.500 8M16 17l2.500 1.500L16 20M6 18.500l7-7"/></svg>
              <svg class="w-[22px] h-[25px]" viewBox="0 0 22 25" fill="none" stroke="#333" stroke-width="1.300"><path d="M6 8v11h10M4.500 10 6 8l1.500 2M14 17.500l2.500 1.500-2.500 1.500"/><rect x="8.500" y="5.500" width="10" height="7"/><path d="M11 15h5"/></svg>
              <svg class="w-[22px] h-[25px]" viewBox="0 0 22 25" fill="none" stroke="#333" stroke-width="1.200"><path d="M5.500 5v7h6M4 7l1.500-2L7 7"/><path d="M8 15h11l-4 5H4.500Z" fill="#b98be8" stroke="#6a38a8"/><path d="M6 17.500h11M13 15l-3 5" stroke="#6a38a8"/></svg>
              <svg class="w-[22px] h-[25px]" viewBox="0 0 22 25" fill="none" stroke="#333" stroke-width="1.200"><path d="M8.500 5v6H3.500M13.500 5v6h5M7.500 7l1-2 1 2M12.500 7l1-2 1 2"/><path d="M8 15h11l-4 5H4.500Z" fill="#b98be8" stroke="#6a38a8"/><path d="M6 17.500h11M13 15l-3 5" stroke="#6a38a8"/></svg>
            </div>
            <span>Selection Filter</span>
            <div class="flex gap-[5px]">
              <svg class="w-[22px] h-[25px]" viewBox="0 0 22 25"><rect x="5" y="6" width="3.500" height="3.500" fill="#a070d8"/><path d="M10 9v8.500l2-1.500 1.500 3 1.500-.7-1.300-3H16Z" fill="#fff" stroke="#222"/></svg>
              <svg class="w-[22px] h-[25px]" viewBox="0 0 22 25"><path d="M4 8h15" stroke="#7a3fc0" stroke-width="2"/><path d="M10 9v8.500l2-1.500 1.500 3 1.500-.7-1.300-3H16Z" fill="#fff" stroke="#222"/></svg>
              <svg class="w-[22px] h-[25px]" viewBox="0 0 22 25"><rect x="5" y="7" width="11" height="9" fill="#c9a2f0" stroke="#7a4ab8"/><path d="M12 9v8.500l2-1.500 1.500 3 1.500-.7-1.300-3H18Z" fill="#fff" stroke="#222"/></svg>
              <svg class="w-[22px] h-[25px] bg-[#0a94d8]" viewBox="0 0 22 25"><rect x="5.500" y="7.500" width="10" height="8" fill="#d9bdf5" stroke="#53309a" stroke-dasharray="2 1"/><path d="M4 6h3v3H4ZM14 6h3v3h-3ZM4 14h3v3H4Z" fill="#5a36a0"/><path d="M11.500 9v8.500l2-1.500 1.500 3 1.500-.7-1.300-3h2.300Z" fill="#fff" stroke="#222"/></svg>
              <svg class="w-[22px] h-[25px]" viewBox="0 0 22 25"><rect x="4.500" y="6.500" width="11.500" height="11" rx="4" fill="#b98be8" stroke="#7040b0"/><path d="M5 12h11M10 7v10" stroke="#7040b0"/><path d="M12 9v8.500l2-1.500 1.500 3 1.500-.7-1.300-3H18Z" fill="#fff" stroke="#222"/></svg>
            </div>
          </div>
          <div class="h-[28px] flex items-center pl-[9px] font-bold tracking-normal"><svg class="w-[5px] h-[7px]" viewBox="0 0 5 7"><path d="M0 0 5 3.500 0 7Z" fill="#222"/></svg><span class="ml-[9px] w-[13px] h-[12px] rounded-sm border border-[#777] bg-linear-to-b from-[#d4d4d4] to-[#f4f4f4]"></span><span class="ml-[6px]">Object Snap</span></div>
          <div class="mt-[4px] mr-[12px] ml-px h-[3px] bg-[#c6c6c6]"></div>
          <div class="mt-[3px] h-[28px] flex items-center pl-[9px] font-bold"><svg class="w-[5px] h-[7px]" viewBox="0 0 5 7"><path d="M0 0 5 3.500 0 7Z" fill="#222"/></svg><span class="ml-[9px] w-[13px] h-[12px] rounded-sm border border-[#777] bg-linear-to-b from-[#d4d4d4] to-[#f4f4f4]"></span><span class="ml-[6px] tracking-[0.04px]">Soft Modification</span></div>
          <div class="mt-[4px] mr-[12px] ml-px h-[3px] bg-[#c6c6c6]"></div>
          <div class="mt-[2px] h-[28px] flex items-center pl-[4px] font-bold"><svg class="w-[5px] h-[7px]" viewBox="0 0 5 7"><path d="M0 0 5 3.500 0 7Z" fill="#222"/></svg><span class="ml-[7px] tracking-[0.07px]">Selection Options</span></div>
          <div class="h-[28px] flex items-center pl-[4px] font-bold"><svg class="w-[5px] h-[7px]" viewBox="0 0 5 7"><path d="M0 0 5 3.500 0 7Z" fill="#222"/></svg><span class="ml-[7px] tracking-[0.1px]">Numerical Inputs</span></div>
          <div class="mt-auto h-[34px] border-t border-[#cfcfcf] flex items-center pl-[7px] pr-[10px] text-[12px] text-[#666] tracking-normal">
            <svg class="w-[12px] h-[12px]" viewBox="0 0 12 12"><circle cx="6" cy="6" r="5.800" fill="#000"/><path d="M4.500 5H6.500V9M4.500 9h3.500" stroke="#fff" stroke-width="1.300" fill="none"/><circle cx="6" cy="2.900" r="1" fill="#fff"/></svg>
            <div class="ml-auto w-[57px] h-[18px] border border-[#b5b5b5] bg-[#ececec] flex items-center justify-center tracking-[-0.4px]">OK</div>
            <div class="ml-[9px] w-[57px] h-[18px] border border-[#b5b5b5] bg-[#ececec] flex items-center justify-center">Cancel</div>
          </div>
        </section>
        <p class="mt-auto mb-[10px] ml-[106px] font-bold text-[11px]">Multiple selections</p>
      </aside>
    </div>

    <!-- tooltip -->
    <div class="absolute left-[803px] top-[328px] w-[220px] h-[14px] border border-[#555] bg-[#fafafa] flex items-center pl-[2px] text-[10.5px] tracking-[-0.2px] text-[#222] font-['Noto_Sans',sans-serif]">Select vertex, edge or face. Alt Key to extrude</div>
  </main>

  <!-- timeline -->
  <div class="h-[47px] shrink-0 bg-[#f0f0f0] border-y-2 border-[#cdcdcd]">
    <div class="h-full flex items-center justify-between pr-[12px]">
      <svg class="w-[170px] h-[43px]" viewBox="0 637 170 43" fill="#484848">
        <path d="M10 653h2v12h-2ZM21.500 653v12L12.500 659ZM42.500 653v12L33 659ZM43.500 656h2v6h-2ZM57.500 652.500V666L68 659ZM80 656h2v6h-2ZM83 653v12l9-6ZM104 653v12l9-6ZM113.500 653h2v12h-2Z"/>
        <rect x="137.500" y="651" width="14" height="14.500" rx="4" fill="url(#gPurple)" stroke="#6a34a8"/><path d="M138 655h14M138 659h14M138 662h14M142 651v14M146 651v14M149 651v14" stroke="#6a34a8" stroke-width=".8"/>
        <path d="M144.500 669h1v5h-1Z" fill="#bbb"/>
        <path d="M150 645h11v3l-4.500 5V675h-2V653l-4.500-5Z" fill="#666"/>
      </svg>
      <svg class="w-[16px] h-[16px] text-[#666]"><use href="#gear"/></svg>
    </div>
  </div>

  <!-- Windows taskbar -->
  <footer class="flex-1 flex bg-[#010a1b] text-white font-['Open_Sans',sans-serif]">
    <div class="w-[45px] flex items-center justify-center"><svg class="w-[15px] h-[15px]" viewBox="0 0 16 16"><path d="M0 2.300 7 1.300V7.600H0ZM7.800 1.200 16 0V7.600H7.800ZM0 8.400H7V14.700L0 13.700ZM7.800 8.400H16V16L7.800 14.800Z" fill="#fff"/></svg></div>
    <div class="w-[322px] bg-[#f2f2f2] flex items-center pl-[9px] pr-[13px] text-[#444]">
      <svg class="w-[20px] h-[20px]" viewBox="0 0 20 20"><circle cx="10" cy="10" r="8.300" fill="none" stroke="#111" stroke-width="2.800"/></svg>
      <span class="ml-[9px] text-[13.5px] tracking-[-0.28px]">Type here to search</span>
      <svg class="ml-auto w-[11px] h-[18px]" viewBox="0 0 11 18" fill="none" stroke="#333" stroke-width="1.200"><rect x="3.300" y="1" width="4.500" height="10" rx="2.200"/><path d="M1 8q0 5 4.500 5T10 8M5.500 13v4M3 17h5"/></svg>
    </div>
    <div class="ml-[3px] w-[596px] grid grid-cols-13">
      <div class="flex justify-center items-center border-b-2 border-[#6fa9dc] mx-[4px]"><svg class="w-[20px] h-[22px]" viewBox="0 0 20 22"><path d="M1 10C2 3 6 .5 10.500.5 16 .5 19 4.500 19 9v3H7q.5 5 6 5 3 0 5.500-1.500V19.500Q16 21.500 12 21.500 3.500 21 3.500 13q0-4 4-6.500Q3 7 1 10ZM7.200 8.800h6.300Q13.300 5.500 10.500 5.500T7.200 8.800Z" fill="#0f7fdc"/></svg></div>
      <div class="flex justify-center items-center border-b-2 border-[#6fa9dc] mx-[4px]"><svg class="w-[22px] h-[19px]" viewBox="0 0 22 19"><path d="M1 1h8l1 2.500h11V17H1Z" fill="#f7dc85"/><path d="M1 1h8l1 2.500H1Z" fill="#e3b54c"/><path d="M4 18v-7h14v7h-3.500v-4h-7v4Z" fill="#45a8dc"/></svg></div>
      <div class="flex justify-center items-center"><svg class="w-[22px] h-[22px]" viewBox="0 0 22 22"><path d="M7 6V4q0-3 4-3t4 3v2" stroke="#ddd" fill="none" stroke-width="1.300"/><path d="M1 6h20v14q0 1.500-1.500 1.500h-17Q1 21.500 1 20Z" fill="#fff"/><path d="M6 8.500h4.500V13H6Z" fill="#f25022"/><path d="M11.500 8.500H16V13h-4.500Z" fill="#7fba00"/><path d="M6 14h4.500v4.500H6Z" fill="#00a4ef"/><path d="M11.500 14H16v4.500h-4.500Z" fill="#ffb900"/></svg></div>
      <div class="flex justify-center items-center"><svg class="w-[22px] h-[22px]" viewBox="0 0 22 22"><circle cx="11" cy="11.500" r="9.800" fill="#f2622a"/><path d="M12 1q9 3 9 11-1 8-9 9.500 6-5 3-11-4-3-3-9.500Z" fill="#fcc93b"/><circle cx="11" cy="10.500" r="4.700" fill="#3a66c8"/><path d="M2 5q3 0 5 2 3 0 4 2-2 2-4 2 0 4 6 3-3 5-8 2-5-4-3-11Z" fill="#f43f3a"/></svg></div>
      <div class="flex justify-center items-center"><svg class="w-[24px] h-[20px]" viewBox="0 0 24 20"><path d="M1 7 12 1l11 6v12H1Z" fill="#fff"/><path d="M2 7.500h20L11 16l2-4.500Z" fill="#010a1b"/></svg></div>
      <div class="flex justify-center items-center border-b-2 border-[#6fa9dc] mx-[4px]"><svg class="w-[22px] h-[22px]" viewBox="0 0 22 22"><circle cx="11" cy="11" r="10.300" fill="#f2c52e"/><path d="M2.100 5.800A10.300 10.300 0 0 1 20 6H11L8 14Z" fill="#dd4b3e"/><path d="M2.100 5.800A10.300 10.300 0 0 0 10 21.300L14 14 6.500 13Z" fill="#3fa556"/><circle cx="11" cy="11" r="5" fill="#fff"/><circle cx="11" cy="11" r="4" fill="#4b86ea"/></svg></div>
      <div class="flex justify-center items-center border-b-2 border-[#6fa9dc] mx-[4px]"><svg class="w-[22px] h-[21px]" viewBox="0 0 22 21"><path d="M12 3h9v15h-9Z" fill="#fff"/><path d="M12 5.500h9M12 8.500h9M12 11.500h9M12 14.500h9M16.500 3v15M12 3h9v15h-9" stroke="#217346" fill="none"/><path d="M0 2.500 13 0v21L0 18.500Z" fill="#1e7145"/><path d="M4 6.500 9 14.500M9 6.500 4 14.500" stroke="#fff" stroke-width="1.900"/></svg></div>
      <div class="flex justify-center items-center border-b-2 border-[#6fa9dc] mx-[4px]"><svg class="w-[18px] h-[18px]" viewBox="0 0 18 18" fill="none" stroke="#fff"><circle cx="9" cy="9" r="4.800" stroke-width="2.400"/><circle cx="9" cy="9" r="7" stroke-width="3" stroke-dasharray="2.749 2.749"/></svg></div>
      <div class="flex justify-center items-center border-b-2 border-[#6fa9dc] mx-[4px]"><svg class="w-[21px] h-[20px]" viewBox="0 0 21 20"><rect width="21" height="20" rx="1" fill="#c10d12"/><path d="M4 15.500q4-2 6-8 .5-4-.5-4.500-1.500 1 1 6 3 4 6 4 1-1.500-2-1.700-5 .2-8.500 2.500-2 1-2 1.700Z" fill="none" stroke="#fff" stroke-width="1.200"/></svg></div>
      <div class="flex justify-center items-center border-b-2 border-[#6fa9dc] mx-[4px]"><svg class="w-[22px] h-[21px]" viewBox="0 0 22 21"><path d="M12 3h9.500v15H12Z" fill="#fff" stroke="#2b579a"/><path d="M13 6h7M13 8.500h7M13 11h7M13 13.500h7M13 16h7" stroke="#2b579a"/><path d="M0 2.500 13 0v21L0 18.500Z" fill="#2b579a"/><path d="M2.500 7 4.500 14 6.500 8 8.500 14 10.500 7" stroke="#fff" stroke-width="1.500" fill="none"/></svg></div>
      <div class="flex justify-center items-center border-b-2 border-[#6fa9dc] mx-[4px]"><svg class="w-[21px] h-[21px]" viewBox="0 0 21 21"><rect x=".5" y=".5" width="20" height="20" fill="#010a1b" stroke="#fff"/><path d="M1 17 8 6l4 6 2.500-3.500L20 17v3H1Z" fill="#fff"/></svg></div>
      <div class="flex justify-center items-center border-b-2 border-[#6fa9dc] bg-[#363d4b]"><svg class="w-[22px] h-[22px]" viewBox="0 0 22 22"><rect width="22" height="22" fill="#fbe3cd"/><path d="M6 2h10v4h-5.500v3H15v4h-4.500v5H6Z" fill="#d98a48"/><path d="M6 2h2.200v16H6Z" fill="#8f5220"/><path d="M12 19h7" stroke="#e0a070" stroke-width="1.500"/></svg></div>
      <div class="flex justify-center items-center border-b-2 border-[#6fa9dc] mx-[4px]"><svg class="w-[22px] h-[22px]" viewBox="0 0 22 22"><circle cx="11" cy="11" r="9.500" fill="#0a0a0a" stroke="#f2f2f2" stroke-width="1.900"/><circle cx="11" cy="11" r="5.500" fill="#ee1d1d"/></svg></div>
    </div>
    <div class="flex-1 flex items-center pl-[45px]">
      <svg class="w-[13px] h-[15px]" viewBox="0 0 13 15" fill="none" stroke="#eee" stroke-width="1.200"><circle cx="8.500" cy="3.500" r="2.500"/><circle cx="4" cy="7.500" r="2"/><path d="M1 14q0-4 3-4t3 4M6 7q6-2 6.500 4"/></svg>
      <svg class="ml-[21px] w-[12px] h-[8px]" viewBox="0 0 12 8"><path d="M1 7l5-5 5 5" fill="none" stroke="#eee" stroke-width="1.300"/></svg>
      <svg class="ml-[10px] w-[16px] h-[14px]" viewBox="0 0 16 14"><rect x="1.500" y="2.500" width="12" height="6.500" fill="none" stroke="#eee" stroke-width="1.300"/><path d="M3 4h5v4H3Z" fill="#eee"/><circle cx="10.500" cy="9" r="4.300" fill="#27a84a"/><path d="M8.500 9l1.500 1.700L12.500 7.500" stroke="#fff" fill="none"/></svg>
      <svg class="ml-[8px] w-[13px] h-[13px]" viewBox="0 0 13 13" fill="none" stroke="#bbb" stroke-width="1.200"><path d="M1 12Q1 2 12 1M4 12.500Q4 5 12 4.500M7 12.500Q7.500 8 12 8"/><circle cx="11" cy="11.500" r="1" fill="#fff"/></svg>
      <svg class="ml-[8px] w-[15px] h-[14px]" viewBox="0 0 15 14" fill="none" stroke="#ddd" stroke-width="1.200"><path d="M1 5h2.500L6.500 2v10L3.500 9H1ZM8.500 5q1.500 2 0 4M10.500 3.500q3 3.500 0 7M12.500 2q4 5 0 10"/></svg>
      <span class="w-[32px] text-center ml-[5px] text-[11px] tracking-[-0.3px]">ENG</span>
      <div class="ml-[-1px] w-[68px] text-center text-[11.5px] leading-[17px] tracking-[-0.52px]">05:23 PM<br>13-04-2019</div>
      <svg class="ml-[8px] w-[24px] h-[24px]" viewBox="0 0 24 24"><path d="M1 3h16v12H8l-3 3v-3H1Z" fill="#fff"/><path d="M3.500 6h11M3.500 9h11M3.500 12h7" stroke="#010a1b" stroke-width="1.200"/><circle cx="16.500" cy="17" r="6.800" fill="#3c3c3c" stroke="#777" stroke-width=".8"/><text x="13.500" y="21" font-size="10.500" font-weight="bold" fill="#fff">4</text></svg>
      <div class="ml-auto mr-[4px] w-px h-full bg-[#3a4352]"></div>
    </div>
  </footer>
</div>
</body>
</html>
